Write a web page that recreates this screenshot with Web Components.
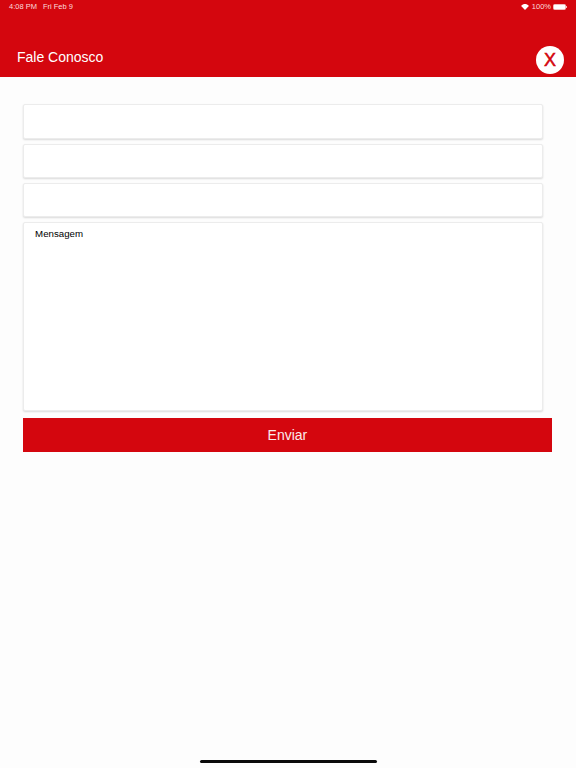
<!DOCTYPE html>
<html lang="pt">
<head>
<meta charset="utf-8">
<title>Fale Conosco</title>
<style>
  html, body { margin: 0; height: 100%; }
  body { background: #fdfdfd; font-family: "Liberation Sans", Arial, sans-serif; }
</style>
</head>
<body>
<contact-page>
  <app-header title="Fale Conosco"></app-header>
  <contact-form>
    <form-field></form-field>
    <form-field></form-field>
    <form-field></form-field>
    <form-field multiline>Mensagem</form-field>
    <send-button>Enviar</send-button>
  </contact-form>
</contact-page>

<script>
class ContactPage extends HTMLElement {
  constructor() {
    super();
    this.attachShadow({ mode: "open" });
  }
  connectedCallback() {
    this.shadowRoot.innerHTML = `
      <style>
        :host { display: flex; flex-direction: column; height: 768px; overflow: hidden; }
        .home { margin: auto 0 5px 200px; width: 177px; height: 3px; border-radius: 2px; background: #0a0a0a; }
      </style>
      <slot></slot>
      <div class="home"></div>
    `;
  }
}

class AppHeader extends HTMLElement {
  constructor() {
    super();
    this.attachShadow({ mode: "open" });
  }
  connectedCallback() {
    this.shadowRoot.innerHTML = `
      <style>
        :host { display: block; height: 77px; background: #d4060e; color: #fff; box-sizing: border-box; }
        .status { display: flex; justify-content: space-between; align-items: center; height: 14px; padding: 0 9px 1px 9px; box-sizing: border-box; font-size: 7.5px; color: #fbdcdc; }
        .status span + span { margin-left: 6px; }
        .right { display: flex; align-items: center; gap: 2px; }
        .wifi { margin-right: 1px; }
        .battery { display: flex; align-items: center; }
        .cell { width: 11px; height: 4px; background: #fff; border: 1px solid #f3b9bb; border-radius: 1.5px; }
        .tip { width: 1px; height: 2px; background: #f3b9bb; }
        .bar { display: flex; justify-content: space-between; padding: 0 12px 0 17px; }
        h1 { margin: 35px 0 0; font-size: 14px; line-height: 16px; font-weight: 400; }
        .close { width: 28px; height: 28px; margin-top: 32px; border: 0; padding: 0; border-radius: 50%; background: #fff; color: #d4060e; font: 400 18px "Liberation Sans", Arial, sans-serif; -webkit-text-stroke: .5px #d4060e; }
      </style>
      <div class="status">
        <div><span>4:08 PM</span><span>Fri Feb 9</span></div>
        <div class="right">
          <svg class="wifi" width="8" height="6" viewBox="0 0 9 7"><path fill="#fff" d="M4.500 7 0 2.200C2.600-.7 6.400-.7 9 2.200Z"/></svg>
          <span>100%</span>
          <div class="battery"><div class="cell"></div><div class="tip"></div></div>
        </div>
      </div>
      <div class="bar">
        <h1>${this.getAttribute("title")}</h1>
        <button class="close">X</button>
      </div>
    `;
  }
}

class ContactForm extends HTMLElement {
  constructor() {
    super();
    this.attachShadow({ mode: "open" });
  }
  connectedCallback() {
    this.shadowRoot.innerHTML = `
      <style>
        :host { display: flex; flex-direction: column; align-items: flex-start; gap: 5px; padding: 27.3px 0 0 22.6px; }
      </style>
      <slot></slot>
    `;
  }
}

class FormField extends HTMLElement {
  constructor() {
    super();
    this.attachShadow({ mode: "open" });
  }
  connectedCallback() {
    this.shadowRoot.innerHTML = `
      <style>
        :host { display: block; box-sizing: border-box; width: 520px; height: 34.3px; padding: 5px 11.5px; background: #fff; border: 1px solid #ececec; border-radius: 2px; box-shadow: 0 1px 2px rgba(0,0,0,.14); color: #000; font-size: 9.7px; }
        :host([multiline]) { height: 188.5px; }
      </style>
      <slot></slot>
    `;
  }
}

class SendButton extends HTMLElement {
  constructor() {
    super();
    this.attachShadow({ mode: "open" });
  }
  connectedCallback() {
    this.shadowRoot.innerHTML = `
      <style>
        :host { display: flex; justify-content: center; align-items: center; width: 529.7px; height: 33.6px; margin-top: 2.7px; background: #d4060e; color: #fbeaea; font-size: 14px; }
      </style>
      <slot></slot>
    `;
  }
}

customElements.define("contact-page", ContactPage);
customElements.define("app-header", AppHeader);
customElements.define("contact-form", ContactForm);
customElements.define("form-field", FormField);
customElements.define("send-button", SendButton);
</script>
</body>
</html>
